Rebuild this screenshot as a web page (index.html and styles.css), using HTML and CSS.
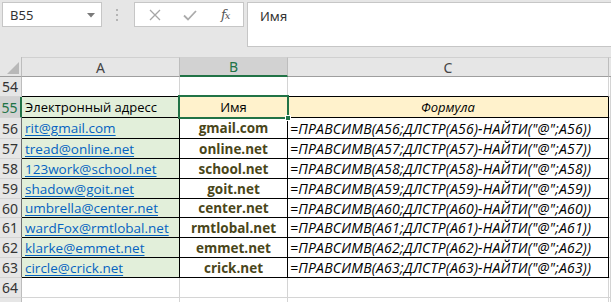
FILE: index.html
```html
<!DOCTYPE html>
<html lang="ru">
<head>
<meta charset="utf-8">
<title>Excel</title>
<link rel="stylesheet" href="styles.css">
</head>
<body>
<div class="toolbar">
  <div class="namebox">
    <span>B55</span>
    <svg class="dd" width="8" height="5" viewBox="0 0 8 5"><path d="M0 0H8L4 4.5Z" fill="#7a7a7a"/></svg>
  </div>
  <div class="grip">
    <svg width="3" height="12" viewBox="0 0 3 12"><rect x="0" y="0" width="2" height="2" fill="#b4b4b4"/><rect x="0" y="5" width="2" height="2" fill="#b4b4b4"/><rect x="0" y="10" width="2" height="2" fill="#b4b4b4"/></svg>
  </div>
  <div class="fbuttons">
    <svg class="ic-x" width="12" height="12" viewBox="0 0 12 12"><path d="M1 1L11 11M11 1L1 11" stroke="#a6a6a6" stroke-width="1.3" fill="none"/></svg>
    <svg class="ic-ok" width="14" height="11" viewBox="0 0 14 11"><path d="M1 5.5L5 9.5L13 1" stroke="#ababab" stroke-width="1.8" fill="none"/></svg>
    <span class="fx">f<span class="fx-x">x</span></span>
  </div>
  <div class="formula">Имя</div>
</div>
<div class="sheet">
  <div class="c corner"><svg width="12" height="12" viewBox="0 0 12 12"><path d="M12 0V12H0Z" fill="#b8b8b8"/></svg></div>
  <div class="c hd">A</div>
  <div class="c hd hd-sel">B</div>
  <div class="c hd">C</div>
  <div class="c hd hd-end"></div>

  <div class="c rh">54</div>
  <div class="c top"></div>
  <div class="c top"></div>
  <div class="c top"></div>
  <div class="c"></div>

  <div class="c rh rh-sel">55</div>
  <div class="c tb a">Электронный адресс</div>
  <div class="c tb y ctr sel-cell">Имя<div class="selbox"><div class="handle"></div></div></div>
  <div class="c tb y ctr it">Формула</div>
  <div class="c"></div>

  <div class="c rh rh-t">56</div>
  <div class="c tb a"><span class="link">rit@gmail.com</span></div>
  <div class="c tb ctr bold">gmail.com</div>
  <div class="c tb it f">=ПРАВСИМВ(A56;ДЛСТР(A56)-НАЙТИ("@";A56))</div>
  <div class="c"></div>

  <div class="c rh rh-t">57</div>
  <div class="c tb a"><span class="link">tread@online.net</span></div>
  <div class="c tb ctr bold">online.net</div>
  <div class="c tb it f">=ПРАВСИМВ(A57;ДЛСТР(A57)-НАЙТИ("@";A57))</div>
  <div class="c"></div>

  <div class="c rh rh-t">58</div>
  <div class="c tb a"><span class="link">123work@school.net</span></div>
  <div class="c tb ctr bold">school.net</div>
  <div class="c tb it f">=ПРАВСИМВ(A58;ДЛСТР(A58)-НАЙТИ("@";A58))</div>
  <div class="c"></div>

  <div class="c rh rh-t">59</div>
  <div class="c tb a"><span class="link">shadow@goit.net</span></div>
  <div class="c tb ctr bold">goit.net</div>
  <div class="c tb it f">=ПРАВСИМВ(A59;ДЛСТР(A59)-НАЙТИ("@";A59))</div>
  <div class="c"></div>

  <div class="c rh rh-t">60</div>
  <div class="c tb a"><span class="link">umbrella@center.net</span></div>
  <div class="c tb ctr bold">center.net</div>
  <div class="c tb it f">=ПРАВСИМВ(A60;ДЛСТР(A60)-НАЙТИ("@";A60))</div>
  <div class="c"></div>

  <div class="c rh rh-t">61</div>
  <div class="c tb a"><span class="link">wardFox@rmtlobal.net</span></div>
  <div class="c tb ctr bold">rmtlobal.net</div>
  <div class="c tb it f">=ПРАВСИМВ(A61;ДЛСТР(A61)-НАЙТИ("@";A61))</div>
  <div class="c"></div>

  <div class="c rh rh-t">62</div>
  <div class="c tb a"><span class="link">klarke@emmet.net</span></div>
  <div class="c tb ctr bold">emmet.net</div>
  <div class="c tb it f">=ПРАВСИМВ(A62;ДЛСТР(A62)-НАЙТИ("@";A62))</div>
  <div class="c"></div>

  <div class="c rh rh-t">63</div>
  <div class="c tb a"><span class="link">circle@crick.net</span></div>
  <div class="c tb ctr bold">crick.net</div>
  <div class="c tb it f">=ПРАВСИМВ(A63;ДЛСТР(A63)-НАЙТИ("@";A63))</div>
  <div class="c"></div>

  <div class="c rh">64</div>
  <div class="c"></div>
  <div class="c"></div>
  <div class="c"></div>
  <div class="c"></div>

  <div class="c rh"></div>
  <div class="c"></div>
  <div class="c"></div>
  <div class="c"></div>
  <div class="c"></div>
</div>
</body>
</html>
```

FILE: styles.css
```css
* { box-sizing: border-box; }
html, body { margin: 0; padding: 0; }
body {
  width: 611px;
  height: 302px;
  overflow: hidden;
  background: #ffffff;
  font-family: "Open Sans", "Noto Sans", sans-serif;
}

.toolbar {
  height: 57px;
  background: #e6e6e6;
  display: flex;
  align-items: flex-start;
  padding: 2px 0 0 2px;
}
.namebox {
  width: 100px;
  height: 25px;
  background: #ffffff;
  border: 1px solid #c6c6c6;
  display: flex;
  align-items: center;
  justify-content: space-between;
  padding: 0 6px 0 7px;
  font-family: "Noto Sans", sans-serif;
  font-size: 13px;
  color: #333333;
}
.namebox .dd { margin-top: 1px; }
.grip {
  width: 32px;
  height: 25px;
  display: flex;
  align-items: center;
  justify-content: center;
  padding-right: 1px;
}
.fbuttons {
  width: 110px;
  height: 25px;
  background: #ffffff;
  border: 1px solid #c6c6c6;
  display: flex;
  align-items: center;
  padding-left: 14px;
}
.ic-x { margin-right: 22px; }
.ic-ok { margin-right: 24px; margin-top: 1px; }
.fx {
  font-family: "DejaVu Serif", "Liberation Serif", serif;
  font-style: italic;
  font-size: 13px;
  color: #555555;
  letter-spacing: -1px;
}
.fx-x { font-size: 10px; }
.formula {
  flex: 1;
  height: 45px;
  margin-left: 3px;
  background: #ffffff;
  border: 1px solid #c6c6c6;
  border-right: none;
  padding: 4px 12px;
  font-family: "Noto Sans", sans-serif;
  font-size: 13px;
  line-height: 18px;
  color: #333333;
}

.sheet {
  display: grid;
  grid-template-columns: 22px 158px 108px 321px 2px;
  grid-template-rows: 20px 20px 21px 21px 20px 20px 20px 19px 20px 20px 20px 20px 20px;
  font-size: 13px;
  color: #000000;
}
.c {
  border-right: 1px solid #d4d4d4;
  border-bottom: 1px solid #d4d4d4;
  display: flex;
  align-items: center;
  white-space: nowrap;
  overflow: hidden;
  min-width: 0;
}
.corner {
  background: #e6e6e6;
  border-right-color: #bdbdbd;
  border-bottom-color: #9e9e9e;
  justify-content: flex-end;
  align-items: flex-end;
  padding: 0 2px 2px 0;
}
.hd {
  background: #e6e6e6;
  border-right-color: #bdbdbd;
  border-bottom-color: #9e9e9e;
  justify-content: center;
  font-family: "Noto Sans", sans-serif;
  font-size: 14px;
  color: #444444;
  border-top: 1px solid #d0d0d0;
}
.hd-sel {
  background: #d2d2d2;
  color: #217346;
  border-bottom: 2px solid #217346;
}
.hd-end { border-right: none; }
.rh {
  background: #e6e6e6;
  border-right-color: #bdbdbd;
  border-bottom-color: #d4d4d4;
  justify-content: center;
  font-family: "Noto Sans", sans-serif;
  font-size: 14px;
  color: #333333;
  padding-right: 1px;
}
.rh-sel {
  background: #d2d2d2;
  color: #217346;
  border-right: 2px solid #217346;
}
.rh-t { border-right-color: #6e6e6e; }

.top { border-bottom-color: #000000; }
.tb {
  border-right-color: #000000;
  border-bottom-color: #000000;
}
.a {
  background: #e2efda;
  padding-left: 3px;
}
.y { background: #fff2cc; }
.ctr { justify-content: center; }
.it { font-style: italic; }
.bold {
  font-weight: 700;
  font-size: 13.5px;
  color: #4a4619;
}
.f {
  padding-left: 2px;
  font-size: 14px;
  letter-spacing: 0.22px;
}
.link {
  color: #0563c1;
  font-size: 13.5px;
  text-decoration: underline;
  text-underline-offset: 2px;
}

.sel-cell { position: relative; overflow: visible; }
.selbox {
  position: absolute;
  left: -2px;
  top: -2px;
  right: -2px;
  bottom: -2px;
  border: 2px solid #217346;
  pointer-events: none;
}
.handle {
  position: absolute;
  right: -4px;
  bottom: -4px;
  width: 6px;
  height: 6px;
  background: #217346;
  border: 1px solid #ffffff;
}
```
